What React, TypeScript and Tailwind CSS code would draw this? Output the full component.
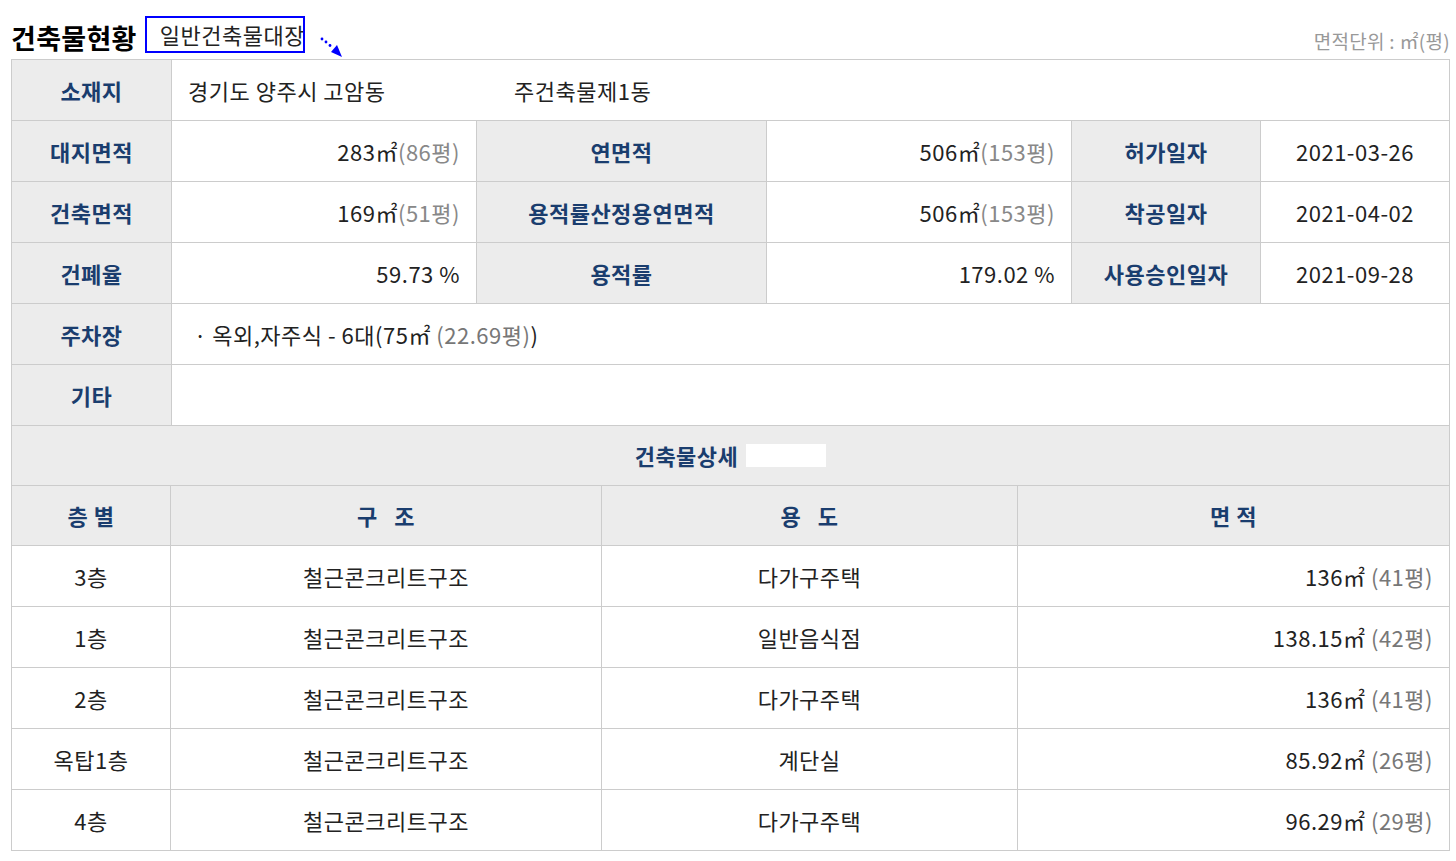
import React from "react";

const font = { fontFamily: '"Noto Sans CJK KR", "Noto Sans", sans-serif' };

const thBase = "bg-[#ececec] border border-[#cccccc] text-[#1a3d6e] font-bold text-center p-0 tracking-[0.5px]";
const th = `${thBase} h-[61px]`;
const thShort = `${thBase} h-[60px]`;
const td = "border border-[#cccccc] h-[61px] text-[#222222] px-4 py-0 tracking-[0.5px]";

const floors = [
  { floor: "3층", structure: "철근콘크리트구조", use: "다가구주택", area: "136㎡", pyeong: "(41평)" },
  { floor: "1층", structure: "철근콘크리트구조", use: "일반음식점", area: "138.15㎡", pyeong: "(42평)" },
  { floor: "2층", structure: "철근콘크리트구조", use: "다가구주택", area: "136㎡", pyeong: "(41평)" },
  { floor: "옥탑1층", structure: "철근콘크리트구조", use: "계단실", area: "85.92㎡", pyeong: "(26평)" },
  { floor: "4층", structure: "철근콘크리트구조", use: "다가구주택", area: "96.29㎡", pyeong: "(29평)" },
];

function Area({ m, p }: { m: string; p: string }) {
  return (
    <>
      {m}
      <span className="text-[#888888]">{p}</span>
    </>
  );
}

export default function App() {
  return (
    <div className="bg-white w-[1456px] h-[861px] overflow-hidden pl-[11px] pr-[6px]" style={font}>
      {/* heading */}
      <div className="flex items-end justify-between h-[59px] pb-[5px]">
        <div className="flex items-end">
          <h2 className="text-[27px] font-bold text-black leading-none mb-[3px] tracking-[0.3px]">건축물현황</h2>
          <div className="ml-[8px] mb-[1px] w-[160px] h-[37px] border-2 border-[#0000ff] overflow-hidden whitespace-nowrap pl-[13px] text-[22px] leading-[33px] tracking-[0.5px] text-[#222222]">
            일반건축물대장
          </div>
          <svg width="26" height="24" viewBox="0 0 26 24" className="ml-[14px] -mb-[6px]">
            <g fill="#0000ff">
              <circle cx="3" cy="3" r="1.4" />
              <circle cx="7" cy="6" r="1.4" />
              <circle cx="11" cy="9.5" r="1.4" />
              <path d="M12 16 L18 9 L23 21 Z" />
            </g>
          </svg>
        </div>
        <div className="text-[19px] text-[#999999] leading-none mb-[4px] tracking-[0.3px]">면적단위 : ㎡(평)</div>
      </div>

      {/* summary */}
      <table className="w-full table-fixed border-collapse text-[22px]">
        <colgroup>
          <col className="w-[160px]" />
          <col className="w-[305px]" />
          <col className="w-[290px]" />
          <col className="w-[305px]" />
          <col className="w-[189px]" />
          <col />
        </colgroup>
        <tbody>
          <tr>
            <td className={th}>소재지</td>
            <td className={td} colSpan={5}>
              <span className="inline-block w-[326px]">경기도 양주시 고암동</span>
              <span>주건축물제1동</span>
            </td>
          </tr>
          <tr>
            <td className={th}>대지면적</td>
            <td className={`${td} text-right`}><Area m="283㎡" p="(86평)" /></td>
            <td className={th}>연면적</td>
            <td className={`${td} text-right`}><Area m="506㎡" p="(153평)" /></td>
            <td className={th}>허가일자</td>
            <td className={`${td} text-center`}>2021-03-26</td>
          </tr>
          <tr>
            <td className={th}>건축면적</td>
            <td className={`${td} text-right`}><Area m="169㎡" p="(51평)" /></td>
            <td className={th}>용적률산정용연면적</td>
            <td className={`${td} text-right`}><Area m="506㎡" p="(153평)" /></td>
            <td className={th}>착공일자</td>
            <td className={`${td} text-center`}>2021-04-02</td>
          </tr>
          <tr>
            <td className={th}>건폐율</td>
            <td className={`${td} text-right`}>59.73 %</td>
            <td className={th}>용적률</td>
            <td className={`${td} text-right`}>179.02 %</td>
            <td className={th}>사용승인일자</td>
            <td className={`${td} text-center`}>2021-09-28</td>
          </tr>
          <tr>
            <td className={th}>주차장</td>
            <td className={`${td} pl-[22px]`} colSpan={5}>
              · 옥외,자주식 - 6대(75㎡ <span className="text-[#777777]">(22.69평)</span>)
            </td>
          </tr>
          <tr>
            <td className={th}>기타</td>
            <td className={td} colSpan={5}></td>
          </tr>
          <tr>
            <td className={thShort} colSpan={6}>
              <span className="inline-flex items-center">
                건축물상세
                <span className="inline-block ml-[8px] w-[80px] h-[23px] bg-white" />
              </span>
            </td>
          </tr>
        </tbody>
      </table>

      {/* floors */}
      <table className="w-full table-fixed border-collapse text-[22px] -mt-px">
        <colgroup>
          <col className="w-[159px]" />
          <col className="w-[431px]" />
          <col className="w-[416px]" />
          <col />
        </colgroup>
        <thead>
          <tr>
            <th className={thShort}>층 별</th>
            <th className={thShort}>구&nbsp;&nbsp;&nbsp;조</th>
            <th className={thShort}>용&nbsp;&nbsp;&nbsp;도</th>
            <th className={thShort}>면 적</th>
          </tr>
        </thead>
        <tbody>
          {floors.map((f, i) => (
            <tr key={i}>
              <td className={`${td} text-center`}>{f.floor}</td>
              <td className={`${td} text-center`}>{f.structure}</td>
              <td className={`${td} text-center`}>{f.use}</td>
              <td className={`${td} text-right`}>
                {f.area} <span className="text-[#777777]">{f.pyeong}</span>
              </td>
            </tr>
          ))}
        </tbody>
      </table>
    </div>
  );
}
